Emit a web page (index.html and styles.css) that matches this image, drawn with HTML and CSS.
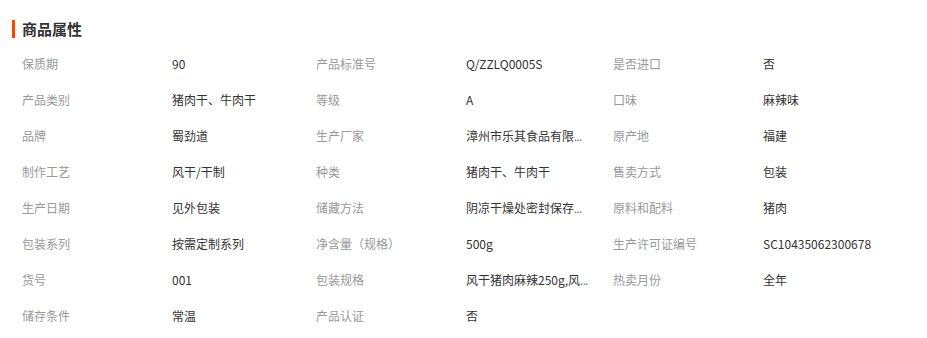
FILE: index.html
```html
<!DOCTYPE html>
<html lang="zh-CN">
<head>
<meta charset="utf-8">
<link rel="stylesheet" href="styles.css">
</head>
<body>
<div class="attrs">
  <h3 class="attrs-title">商品属性</h3>
  <div class="grid">
    <div class="k">保质期</div><div class="v">90</div>
    <div class="k">产品标准号</div><div class="v">Q/ZZLQ0005S</div>
    <div class="k">是否进口</div><div class="v">否</div>

    <div class="k">产品类别</div><div class="v">猪肉干、牛肉干</div>
    <div class="k">等级</div><div class="v">A</div>
    <div class="k">口味</div><div class="v">麻辣味</div>

    <div class="k">品牌</div><div class="v">蜀劲道</div>
    <div class="k">生产厂家</div><div class="v" title="漳州市乐其食品有限公司">漳州市乐其食品有限<span class="more">...</span></div>
    <div class="k">原产地</div><div class="v">福建</div>

    <div class="k">制作工艺</div><div class="v">风干/干制</div>
    <div class="k">种类</div><div class="v">猪肉干、牛肉干</div>
    <div class="k">售卖方式</div><div class="v">包装</div>

    <div class="k">生产日期</div><div class="v">见外包装</div>
    <div class="k">储藏方法</div><div class="v" title="阴凉干燥处密封保存">阴凉干燥处密封保存<span class="more">...</span></div>
    <div class="k">原料和配料</div><div class="v">猪肉</div>

    <div class="k">包装系列</div><div class="v">按需定制系列</div>
    <div class="k">净含量（规格）</div><div class="v">500g</div>
    <div class="k">生产许可证编号</div><div class="v">SC10435062300678</div>

    <div class="k">货号</div><div class="v">001</div>
    <div class="k">包装规格</div><div class="v" title="风干猪肉麻辣250g,风干牛肉">风干猪肉麻辣250g,风<span class="more">...</span></div>
    <div class="k">热卖月份</div><div class="v">全年</div>

    <div class="k">储存条件</div><div class="v">常温</div>
    <div class="k">产品认证</div><div class="v">否</div>
  </div>
</div>
</body>
</html>
```
FILE: styles.css
```css
html, body {
  margin: 0;
  padding: 0;
  background: #fff;
}
body {
  font-family: "Noto Sans CJK SC", "Noto Sans", sans-serif;
  font-size: 12px;
  color: #333;
}
.attrs {
  padding: 20px 0 0 12px;
}
.attrs-title {
  margin: 0;
  height: 18px;
  line-height: 18px;
  font-size: 15px;
  font-weight: bold;
  color: #333;
  border-left: 3px solid #ff4400;
  padding-left: 7px;
}
.grid {
  display: grid;
  grid-template-columns: 150px 144px 150px 147px 150px 145px;
  grid-auto-rows: 35.9px;
  align-items: center;
  margin-top: 8px;
  padding-left: 10px;
}
.k {
  color: #999;
  white-space: nowrap;
}
.v {
  color: #333;
  white-space: nowrap;
}
.more {
  color: #666;
  font-size: 11px;
  letter-spacing: -0.5px;
}
```
